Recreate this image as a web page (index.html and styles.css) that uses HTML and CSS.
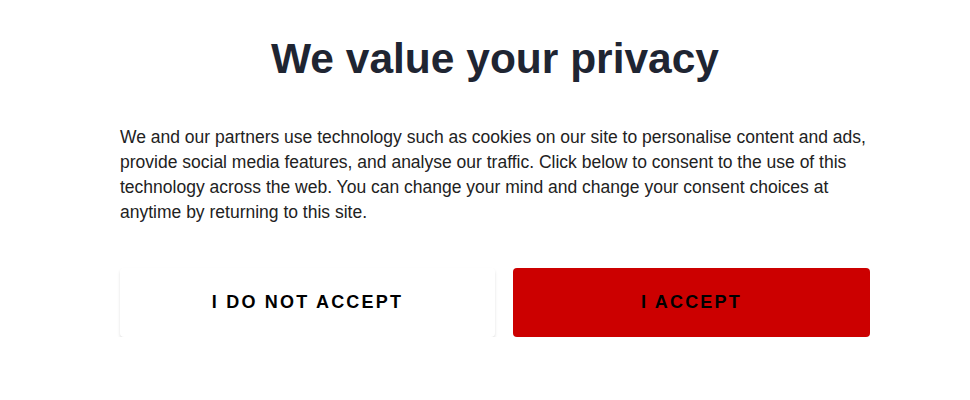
FILE: index.html
```html
<!DOCTYPE html>
<html lang="en">

<head>
  <meta charset="UTF-8">
  <meta name="viewport" content="width=device-width, initial-scale=1.0">
  <title>Privacy</title>
  <link rel="stylesheet" href="styles.css">
</head>

<body>
  <div class="consent">
    <h1 class="consent-title">We value your privacy</h1>
    <p class="consent-text">
      We and our partners use technology such as cookies on our site to personalise content and ads,
      provide social media features, and analyse our traffic. Click below to consent to the use of this
      technology across the web. You can change your mind and change your consent choices at
      anytime by returning to this site.
    </p>
    <div class="consent-buttons">
      <button class="btn btn-reject" type="button">I DO NOT ACCEPT</button>
      <button class="btn btn-accept" type="button">I ACCEPT</button>
    </div>
  </div>
</body>

</html>
```

FILE: styles.css
```css
html,
body {
  margin: 0;
  padding: 0;
  background-color: white;
  font-family: "Liberation Sans", Arial, sans-serif;
}

.consent {
  width: 750px;
  margin-left: 120px;
  padding-top: 29px;
}

.consent-title {
  margin: 0;
  font-size: 42.5px;
  line-height: 60px;
  font-weight: bold;
  text-align: center;
  color: #1f2532;
}

.consent-text {
  margin: 36px 0 0 0;
  font-size: 17.5px;
  line-height: 25px;
  color: #222;
}

.consent-buttons {
  display: flex;
  gap: 18px;
  margin-top: 43px;
}

.btn {
  height: 69px;
  border: none;
  border-radius: 4px;
  font-family: "Liberation Sans", Arial, sans-serif;
  font-size: 18px;
  font-weight: bold;
  letter-spacing: 2.2px;
  color: black;
  cursor: pointer;
}

.btn-reject {
  width: 375px;
  background-color: white;
  box-shadow: 0 2px 3px rgba(0, 0, 0, 0.13);
}

.btn-accept {
  width: 357px;
  background-color: #cc0000;
}
```
